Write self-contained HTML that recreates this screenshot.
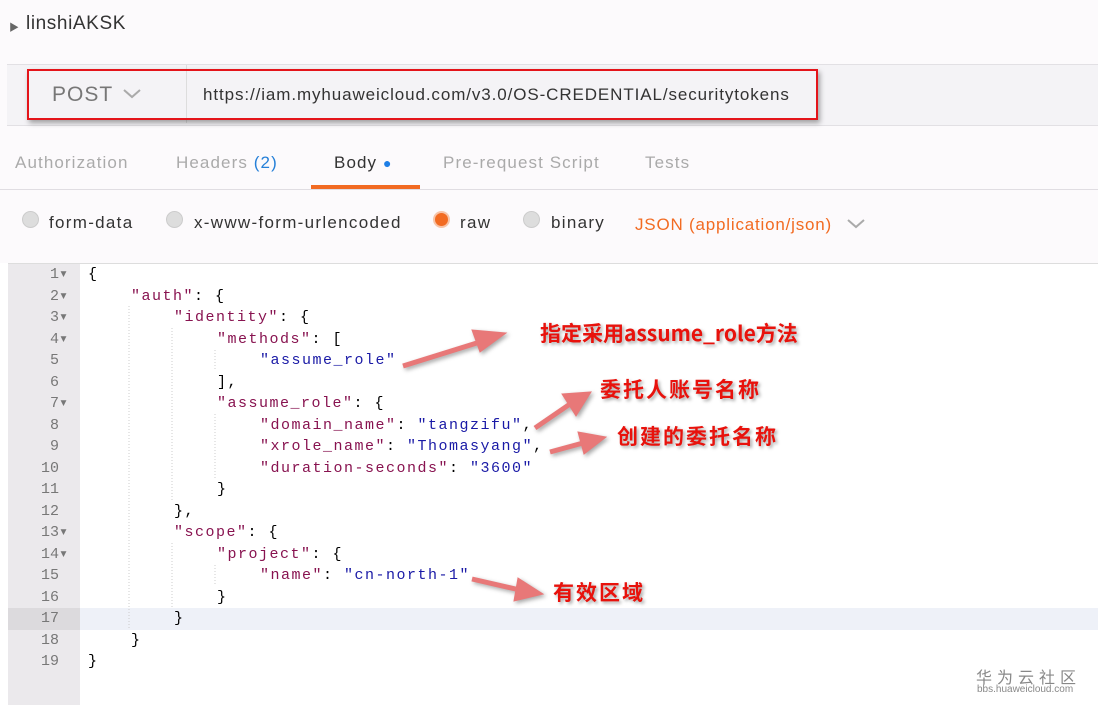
<!DOCTYPE html>
<html><head><meta charset="utf-8"><style>
body{margin:0;width:1098px;height:705px;background:#fff;position:relative;overflow:hidden;font-family:"Liberation Sans","Noto Sans CJK SC",sans-serif}
.a{position:absolute;white-space:nowrap}
.top{position:absolute;left:0;top:0;width:1098px;height:263px;background:#fcfafc}
.code{font-family:"Liberation Mono",monospace;font-size:15px;letter-spacing:1.5px;line-height:21.5px;color:#000}
.k{color:#881350}.s{color:#1a1aa6}
.ln{position:absolute;left:8px;width:60px;text-align:right;font-family:"Liberation Mono",monospace;font-size:15px;line-height:21.5px;color:#777}
.lbl{position:absolute;color:#e8120c;font-weight:bold;font-size:21px;font-family:"Noto Sans CJK SC",sans-serif;text-shadow:2px 2px 3px rgba(0,0,0,.35);white-space:nowrap}
.radio{position:absolute;width:15px;height:15px;border-radius:50%;background:#ddd;border:1px solid #ccc;top:211px}
.tab{position:absolute;top:153px;font-size:17px;color:#aaa;letter-spacing:1.1px}
.rl{position:absolute;top:213px;font-size:17px;color:#333;letter-spacing:1.3px}
</style></head><body>
<div class="top"></div>
<div class="a" style="left:9px;top:19px;font-size:10px;color:#666">&#9654;</div>
<div class="a" style="left:26px;top:13px;font-size:19px;color:#333;letter-spacing:0.6px">linshiAKSK</div>

<div class="a" style="left:7px;top:64px;width:1091px;height:60px;background:#f4f3f6;border-top:1px solid #e2e0e4;border-bottom:1px solid #e2e0e4"></div>
<div class="a" style="left:186px;top:65px;width:1px;height:58px;background:#ddd"></div>
<div class="a" style="left:27px;top:69px;width:787px;height:47px;border:2px solid #e4141a;box-shadow:2px 3px 5px rgba(0,0,0,.35)"></div>
<div class="a" style="left:52px;top:83px;font-size:21px;color:#777;letter-spacing:1px">POST</div>
<svg class="a" style="left:122px;top:88px" width="20" height="12"><path d="M2 2 L10 9 L18 2" stroke="#aaa" stroke-width="2" fill="none"/></svg>
<div class="a" style="left:203px;top:85px;font-size:17px;color:#333;letter-spacing:0.9px">https://iam.myhuaweicloud.com/v3.0/OS-CREDENTIAL/securitytokens</div>

<div class="a" style="left:0;top:189px;width:1098px;height:1px;background:#e0dde2"></div>
<div class="tab" style="left:15px">Authorization</div>
<div class="tab" style="left:176px">Headers <span style="color:#2680d8">(2)</span></div>
<div class="tab" style="left:334px;color:#333">Body <span style="color:#1e7ee6;font-size:14px">&#9679;</span></div>
<div class="a" style="left:311px;top:185px;width:109px;height:4px;background:#f26b22"></div>
<div class="tab" style="left:443px">Pre-request Script</div>
<div class="tab" style="left:645px">Tests</div>

<div class="radio" style="left:22px"></div><div class="rl" style="left:49px">form-data</div>
<div class="radio" style="left:166px"></div><div class="rl" style="left:194px">x-www-form-urlencoded</div>
<div class="radio" style="left:433px;background:#f26b22;border:2px solid #f7c4a8;width:13px;height:13px"></div><div class="rl" style="left:460px">raw</div>
<div class="radio" style="left:523px"></div><div class="rl" style="left:551px">binary</div>
<div class="a" style="left:635px;top:215px;font-size:17px;color:#f26b22;letter-spacing:0.8px">JSON (application/json)</div>
<svg class="a" style="left:846px;top:218px" width="20" height="12"><path d="M2 2 L10 9 L18 2" stroke="#aaa" stroke-width="2" fill="none"/></svg>

<div class="a" style="left:8px;top:263px;width:1090px;height:1px;background:#ddd"></div>
<div class="a" style="left:8px;top:264px;width:72px;height:441px;background:#ebe9ec"></div>
<div class="a" style="left:80px;top:608px;width:1018px;height:22px;background:#eef1f8"></div>
<div class="a" style="left:8px;top:608px;width:72px;height:22px;background:#dcdadd"></div>

<div class="code">
<div class="a" style="left:88px;top:264px">{</div>
<div class="a" style="left:131px;top:285.5px"><span class="k">"auth"</span>: {</div>
<div class="a" style="left:174px;top:307px"><span class="k">"identity"</span>: {</div>
<div class="a" style="left:217px;top:328.5px"><span class="k">"methods"</span>: [</div>
<div class="a" style="left:260px;top:350px"><span class="s">"assume_role"</span></div>
<div class="a" style="left:217px;top:371.5px">],</div>
<div class="a" style="left:217px;top:393px"><span class="k">"assume_role"</span>: {</div>
<div class="a" style="left:260px;top:414.5px"><span class="k">"domain_name"</span>: <span class="s">"tangzifu"</span>,</div>
<div class="a" style="left:260px;top:436px"><span class="k">"xrole_name"</span>: <span class="s">"Thomasyang"</span>,</div>
<div class="a" style="left:260px;top:457.5px"><span class="k">"duration-seconds"</span>: <span class="s">"3600"</span></div>
<div class="a" style="left:217px;top:479px">}</div>
<div class="a" style="left:174px;top:500.5px">},</div>
<div class="a" style="left:174px;top:522px"><span class="k">"scope"</span>: {</div>
<div class="a" style="left:217px;top:543.5px"><span class="k">"project"</span>: {</div>
<div class="a" style="left:260px;top:565px"><span class="k">"name"</span>: <span class="s">"cn-north-1"</span></div>
<div class="a" style="left:217px;top:586.5px">}</div>
<div class="a" style="left:174px;top:608px">}</div>
<div class="a" style="left:131px;top:629.5px">}</div>
<div class="a" style="left:88px;top:651px">}</div>
</div>
<div class="ln" style="top:264px">1&#9662;</div><div class="ln" style="top:285.5px">2&#9662;</div><div class="ln" style="top:307px">3&#9662;</div><div class="ln" style="top:328.5px">4&#9662;</div><div class="ln" style="top:350px">5&nbsp;</div><div class="ln" style="top:371.5px">6&nbsp;</div><div class="ln" style="top:393px">7&#9662;</div><div class="ln" style="top:414.5px">8&nbsp;</div><div class="ln" style="top:436px">9&nbsp;</div><div class="ln" style="top:457.5px">10&nbsp;</div><div class="ln" style="top:479px">11&nbsp;</div><div class="ln" style="top:500.5px">12&nbsp;</div><div class="ln" style="top:522px">13&#9662;</div><div class="ln" style="top:543.5px">14&#9662;</div><div class="ln" style="top:565px">15&nbsp;</div><div class="ln" style="top:586.5px">16&nbsp;</div><div class="ln" style="top:608px">17&nbsp;</div><div class="ln" style="top:629.5px">18&nbsp;</div><div class="ln" style="top:651px">19&nbsp;</div>

<svg class="a" style="left:0;top:0" width="1098" height="705">
<g stroke="#ccc" stroke-dasharray="1,2" stroke-width="1">
<line x1="129" y1="306" x2="129" y2="628"/><line x1="172" y1="328" x2="172" y2="500"/><line x1="172" y1="543" x2="172" y2="607"/><line x1="215" y1="350" x2="215" y2="370"/><line x1="215" y1="414" x2="215" y2="478"/><line x1="215" y1="565" x2="215" y2="585"/>
</g>
<g fill="#e87878" stroke="#e87878" style="filter:drop-shadow(2px 2px 2px rgba(0,0,0,.35))">
<path d="M403 366 L480 342" stroke-width="5" fill="none"/><path d="M472 330 L506 333 L480 352 Z"/>
<path d="M535 428 L570 404" stroke-width="5" fill="none"/><path d="M562 394 L591 392 L576 416 Z"/>
<path d="M550 452 L583 443" stroke-width="5" fill="none"/><path d="M578 432 L606 437 L584 454 Z"/>
<path d="M472 579 L520 590" stroke-width="5" fill="none"/><path d="M518 578 L543 594 L514 601 Z"/>
</g>
</svg>
<div class="lbl" style="left:540px;top:318px">指定采用assume_role方法</div>
<div class="lbl" style="left:600px;top:374px;letter-spacing:2px">委托人账号名称</div>
<div class="lbl" style="left:617px;top:421px;letter-spacing:2px">创建的委托名称</div>
<div class="lbl" style="left:553px;top:577px;letter-spacing:2px">有效区域</div>

<div class="a" style="left:976px;top:664px;font-size:16px;color:#888;letter-spacing:5px;font-family:'Noto Sans CJK SC',sans-serif">华为云社区</div>
<div class="a" style="left:977px;top:684px;font-size:10px;color:#888">bbs.huaweicloud.com</div>
</body></html>
